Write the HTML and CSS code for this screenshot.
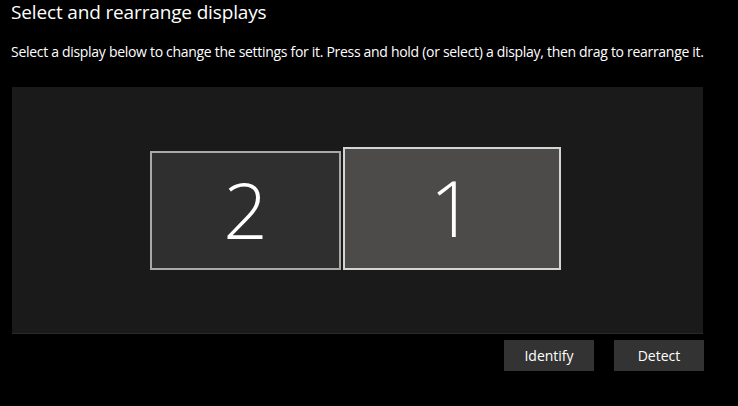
FILE: index.html
```html
<!DOCTYPE html>
<html>
<head>
<meta charset="utf-8">
<link rel="stylesheet" href="styles.css">
</head>
<body>
<h1 class="title">Select and rearrange displays</h1>
<p class="desc">Select a display below to change the settings for it. Press and hold (or select) a display, then drag to rearrange it.</p>
<div class="canvas">
  <div class="display d2"><span class="num">2</span></div>
  <div class="display d1"><span class="num">1</span></div>
</div>
<div class="actions">
  <button class="btn">Identify</button>
  <button class="btn">Detect</button>
</div>
</body>
</html>
```
FILE: styles.css
```css
html, body {
  margin: 0;
  padding: 0;
  background: #000;
  color: #fff;
  font-family: "Open Sans", "Noto Sans", sans-serif;
}
body {
  width: 738px;
  height: 406px;
  overflow: hidden;
}
.title {
  margin: 0;
  padding: 0 0 0 11px;
  font-size: 19px;
  font-weight: 400;
  line-height: 24px;
  letter-spacing: -0.15px;
}
.desc {
  margin: 18px 0 0 0;
  padding-left: 11px;
  font-size: 14px;
  line-height: 19px;
  letter-spacing: -0.3px;
  white-space: nowrap;
}
.canvas {
  position: relative;
  margin: 26px 0 0 12px;
  width: 691px;
  height: 246px;
  background: #1a1a1a;
  border-bottom: 1px solid #2a2a2a;
}
.display {
  position: absolute;
  box-sizing: border-box;
  display: flex;
  align-items: center;
  justify-content: center;
  padding-bottom: 3px;
}
.d2 {
  left: 138px;
  top: 64px;
  width: 191px;
  height: 119px;
  background: #2f2f2f;
  border: 2px solid #a9a9a9;
}
.d1 {
  left: 331px;
  top: 60px;
  width: 218px;
  height: 123px;
  background: #4c4b4a;
  border: 2px solid #d4d4d4;
}
.num {
  font-family: "Open Sans", "Noto Sans", sans-serif;
  font-weight: 300;
  font-size: 78px;
  line-height: 1;
  color: #fff;
}
.actions {
  display: flex;
  justify-content: flex-end;
  gap: 20px;
  margin-top: 6px;
  padding-right: 34px;
}
.btn {
  width: 90px;
  height: 31px;
  border: none;
  background: #333333;
  color: #fff;
  font-family: "Open Sans", "Noto Sans", sans-serif;
  font-size: 14px;
  padding: 0;
}
```
